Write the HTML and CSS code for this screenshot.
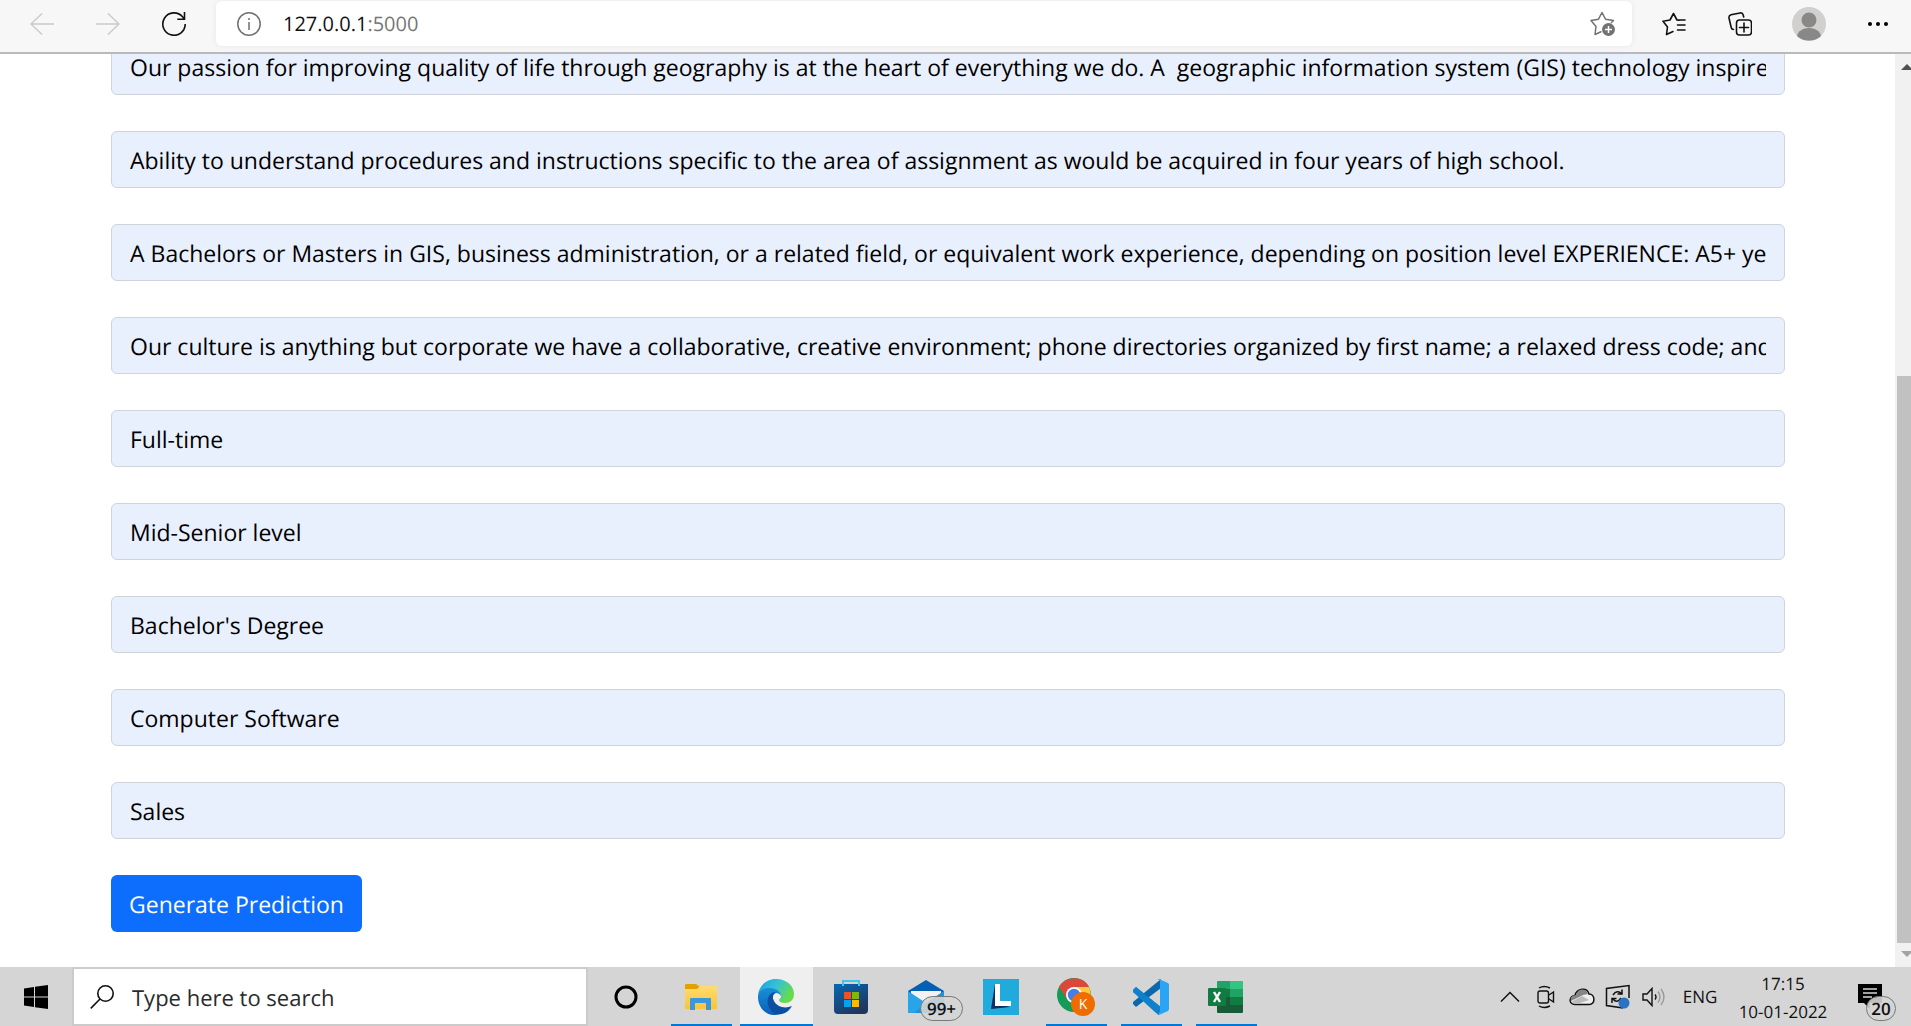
FILE: index.html
```html
<!DOCTYPE html>
<html lang="en">
<head>
<meta charset="utf-8">
<title>127.0.0.1:5000</title>
<link rel="stylesheet" href="styles.css">
</head>
<body>
<header class="toolbar">
  <button class="tool" aria-label="Back" disabled><svg width="24" height="24" viewBox="0 0 24 24" fill="none" stroke="#cacaca" stroke-width="1.4"><path d="M24 12H1M12 1.500L1 12l11 10.500"/></svg></button>
  <button class="tool" aria-label="Forward" disabled><svg width="24" height="24" viewBox="0 0 24 24" fill="none" stroke="#cacaca" stroke-width="1.400"><path d="M0 12h23M12 1.500L23 12 12 22.500"/></svg></button>
  <button class="tool" aria-label="Refresh"><svg width="24" height="24" viewBox="0 0 24 24" fill="none" stroke="#111" stroke-width="1.600"><path d="M23.200 12A11.200 11.200 0 1 1 20.500 4.800L22.500 7M22.500 0v7.200h-7.200"/></svg></button>
  <div class="address">
    <svg width="24" height="24" viewBox="0 0 24 24" fill="none" stroke="#6f6f6f" stroke-width="1.500"><circle cx="12" cy="12" r="11.200"/><path d="M12 10v8M12 6v2"/></svg>
    <span class="url">127.0.0.1<span class="port">:5000</span></span>
    <button class="add-favorite" aria-label="Add this page to favorites"><svg width="26" height="26" viewBox="0 0 26 26" fill="none" stroke="#727272" stroke-width="1.500" stroke-linejoin="round"><path d="M11.500 20.500L5 23.500l1-8L1 9.500l7.500-1.300L12 1.500l3.500 6.700 8 1.300-2.500 2.500"/><circle cx="18.500" cy="18.500" r="6.500" fill="#727272" stroke="none"/><path stroke="#fff" d="M18.500 15v7M15 18.500h7"/></svg></button>
  </div>
  <button class="tool" aria-label="Favorites"><svg width="24" height="24" viewBox="0 0 24 24" fill="none" stroke="#111" stroke-width="1.600" stroke-linejoin="round" stroke-linecap="round"><path d="M11 19.500L4.500 22.500l1-7.500L1 9.200l7-1.200 3.500-6.500L15 8l2 .3M15.500 8H23M15.500 13H23M15.500 18H23"/></svg></button>
  <button class="tool" aria-label="Collections"><svg width="24" height="24" viewBox="0 0 24 24" fill="none" stroke="#111" stroke-width="1.600" stroke-linecap="round"><rect x="8.500" y="8" width="15" height="15" rx="3"/><path d="M16 11v9M11.500 15.500h9M5.500 17.500c-1 0-2-.8-2.300-2L1 6c-.3-1.700.5-2.700 2-3.200L12 1c1.700-.3 2.800.5 3.200 2l.5 2"/></svg></button>
  <button class="tool profile" aria-label="Profile"><svg width="34" height="34" viewBox="0 0 34 34"><circle cx="17" cy="17" r="17" fill="#d2d0ce"/><circle cx="17" cy="13" r="7.500" fill="#8a8886"/><path d="M5 29c1-5 6-8 12-8s11 3 12 8c-6 6-18 6-24 0z" fill="#8a8886"/></svg></button>
  <button class="tool" aria-label="Settings and more"><svg width="20" height="6" viewBox="0 0 20 6"><circle cx="2" cy="3" r="2"/><circle cx="10" cy="3" r="2"/><circle cx="18" cy="3" r="2"/></svg></button>
</header>

<main class="viewport">
  <form class="form">
    <input class="field" aria-label="Company profile" value="Our passion for improving quality of life through geography is at the heart of everything we do. A&nbsp; geographic information system (GIS) technology inspire">
    <input class="field" aria-label="Description" value="Ability to understand procedures and instructions specific to the area of assignment as would be acquired in four years of high school.">
    <input class="field" aria-label="Requirements" value="A Bachelors or Masters in GIS, business administration, or a related field, or equivalent work experience, depending on position level EXPERIENCE: A5+ years">
    <input class="field" aria-label="Benefits" value="Our culture is anything but corporate we have a collaborative, creative environment; phone directories organized by first name; a relaxed dress code; and o">
    <input class="field" aria-label="Employment type" value="Full-time">
    <input class="field" aria-label="Required experience" value="Mid-Senior level">
    <input class="field" aria-label="Required education" value="Bachelor's Degree">
    <input class="field" aria-label="Industry" value="Computer Software">
    <input class="field" aria-label="Function" value="Sales">
    <button class="submit" type="button">Generate Prediction</button>
  </form>
  <div class="scrollbar">
    <svg class="arrow" width="12" height="6" viewBox="0 0 12 6"><path d="M0 6l6-6 6 6z" fill="#505050"/></svg>
    <div class="track"><div class="thumb"></div></div>
    <svg class="arrow" width="12" height="6" viewBox="0 0 12 6"><path d="M0 0l6 6 6-6z" fill="#a3a3a3"/></svg>
  </div>
</main>

<footer class="taskbar">
  <button class="start" aria-label="Start"><svg width="24" height="24" viewBox="0 0 24 24"><path d="M0 3.400L10 2v9.400H0zM11 1.800L24 0v11.400H11zM0 12.400h10V22L0 20.600zM11 12.400h13V24l-13-1.800z"/></svg></button>
  <label class="search">
    <svg width="24" height="24" viewBox="0 0 24 24" fill="none" stroke="#111" stroke-width="1.600"><circle cx="15.500" cy="8.500" r="7.700"/><path d="M10 14L.8 23.400"/></svg>
    <input class="search-input" aria-label="Search" placeholder="Type here to search">
  </label>
  <nav class="tasks">
    <button class="task" aria-label="Cortana"><svg width="24" height="24" viewBox="0 0 24 24"><circle cx="12" cy="12" r="10" fill="none" stroke="#000" stroke-width="3"/></svg></button>
    <button class="task open" aria-label="File Explorer"><svg width="34" height="28" viewBox="0 0 34 28"><defs><linearGradient id="folder" x2="0" y2="1"><stop stop-color="#ffdb70"/><stop offset="1" stop-color="#fac43a"/></linearGradient></defs><path d="M1 6V2q0-1 1-1h10l4 3-3 3z" fill="#e3a100"/><path d="M1 6h12l3-3h16q1 0 1 1v21q0 1-1 1H2q-1 0-1-1z" fill="url(#folder)"/><path d="M6 27V16q0-1 1-1h19q1 0 1 1v11h-5v-7H11v7z" fill="#3a96dd"/></svg></button>
    <button class="task active" aria-label="Microsoft Edge"><svg width="36" height="36" viewBox="0 0 36 36"><defs><linearGradient id="edgeTop" x1="0" x2="1" y2=".5"><stop stop-color="#1a9bdf"/><stop offset=".5" stop-color="#35c1d8"/><stop offset="1" stop-color="#68dc48"/></linearGradient><linearGradient id="edgeLeft" x2="0" y2="1"><stop stop-color="#1790d8"/><stop offset="1" stop-color="#0a5fb8"/></linearGradient></defs><path d="M0 16C1 7 8 0 18 0c11 0 18 7 18 15 0 6-4 9-9 9-4 0-6-1-6-3 0-1 2-1 2-4 0-4-4-7-10-7C7 10 2 12 0 16z" fill="url(#edgeTop)"/><path d="M0 18C0 12 5 9 11 9c8 0 12 4 12 8-1-2-3-3-5-3-5 0-7 5-5 10 2 6 7 9 13 8-3 3-6 4-9 4C7 36 0 28 0 18z" fill="url(#edgeLeft)"/><path d="M14 14c-5 3-6 10-2 16 3 5 8 6 12 5 4-1 8-4 10-8-7 3-15 1-18-5-2-4-1-7 2-8-1-1-3-1-4 0z" fill="#0c4fa0"/></svg></button>
    <button class="task" aria-label="Microsoft Store"><svg width="36" height="36" viewBox="0 0 36 36"><defs><linearGradient id="store" x2=".6" y2="1"><stop stop-color="#0669b2"/><stop offset="1" stop-color="#20365f"/></linearGradient></defs><path d="M1 5h34v26q0 4-4 4H5q-4 0-4-4z" fill="url(#store)"/><path d="M10 7V2h16v5" fill="none" stroke="#41c7ee" stroke-width="2"/><path d="M11 13h7v7h-7z" fill="#f25022"/><path d="M19 13h7v7h-7z" fill="#7fba00"/><path d="M11 21h7v7h-7z" fill="#00a4ef"/><path d="M19 21h7v7h-7z" fill="#ffb900"/></svg></button>
    <button class="task" aria-label="Mail"><svg width="36" height="36" viewBox="0 0 36 36"><path d="M0 12L18 1l18 11v5H0z" fill="#0560b3"/><path d="M3 12h30v8L18 26 3 20z" fill="#f2f2f2"/><path d="M0 12l18 12 18-12v22H0z" fill="#27a5e8"/><path d="M18 24l18-12v22H6z" fill="#1687d8" opacity=".6"/></svg><span class="badge mail-badge">99+</span></button>
    <button class="task" aria-label="L"><svg width="36" height="36" viewBox="0 0 36 36"><path d="M0 0h36v36H0z" fill="#21abdc"/><path d="M12 5L8 30l19-2-14-4z" fill="#0c2f62"/><path d="M12 5h5v17h11v5H12z" fill="#fff"/></svg></button>
    <button class="task open" aria-label="Google Chrome"><svg width="38" height="38" viewBox="0 0 38 38"><circle cx="17" cy="17" r="17" fill="#149b57"/><path d="M2 9C8-2 26-3 32 9H17L10 21z" fill="#dc473b"/><path d="M17 9h15c5 11-2 24-15 25l7-13z" fill="#fdc938"/><circle cx="17" cy="17" r="8" fill="#fff"/><circle cx="17" cy="17" r="6.200" fill="#447ee8"/><circle cx="26" cy="26" r="12" fill="#ef6c00"/><text x="26" y="31" text-anchor="middle" class="initial">K</text></svg></button>
    <button class="task open" aria-label="Visual Studio Code"><svg width="36" height="36" viewBox="0 0 36 36"><path d="M0 11l3-3 25 20v7L0 13z" fill="#0f80cc"/><path d="M0 25l3 3L28 9V0L0 23z" fill="#0b68ad"/><path d="M26 0l9 4q1 1 1 2v24q0 1-1 2l-9 4-2-1q3 0 3-2V3q0-3-3-2z" fill="#2aa4f4"/><path d="M0 11l3-3 23 19v9l-3-2L0 13z" fill="#0f80cc"/></svg></button>
    <button class="task open" aria-label="Excel"><svg width="36" height="34" viewBox="0 0 36 34"><path d="M9 2q0-1 1-1h12v8H9z" fill="#21a366"/><path d="M22 1h12q1 0 1 1v7H22z" fill="#33c481"/><path d="M9 9h13v8H9z" fill="#107c41"/><path d="M22 9h13v8H22z" fill="#21a366"/><path d="M9 17h26v15q0 1-1 1H10q-1 0-1-1z" fill="#185c37"/><path d="M22 17h13v8H22z" fill="#107c41"/><rect y="8" width="18" height="18" rx="1" fill="#107c41"/><path d="M6 12l6 10M12 12L6 22" stroke="#fff" stroke-width="2.400"/></svg></button>
  </nav>
  <div class="tray">
    <button class="tray-item" aria-label="Show hidden icons"><svg width="20" height="12" viewBox="0 0 20 12" fill="none" stroke="#111" stroke-width="1.500"><path d="M1 10.500l9-9 9 9"/></svg></button>
    <button class="tray-item" aria-label="Meet Now"><svg width="18" height="24" viewBox="0 0 18 24" fill="none" stroke="#111" stroke-width="1.400"><rect x="1" y="6" width="10.500" height="12" rx="2"/><path d="M12 10l4.500-3v10L12 14M2 3q5-3 11 0M2 21q5 3 11 0"/></svg></button>
    <button class="tray-item" aria-label="OneDrive"><svg width="26" height="18" viewBox="0 0 26 18"><path d="M6 16.500c-7 0-6-9 0-9C8 0 18-1 20 6c6 0 7 10 0 10.500z" fill="#eee" stroke="#111" stroke-width="1.500"/><path d="M2 13l12-6 5-1C17 0 9 0 7 7c-4 0-6 3-5 6z" fill="#858585"/><path d="M2 14l11-6 7 4-12 4z" fill="#bbb"/></svg></button>
    <button class="tray-item" aria-label="Windows Update"><svg width="26" height="26" viewBox="0 0 26 26" fill="none" stroke="#111" stroke-width="1.500"><path d="M18 24L1.500 21.500V4.500L24 1.500V14M8 11q4-6 9-1M17 5.500V10h-4.500M16 14q-4 6-8 1M7 19v-4.500h4.500"/><circle cx="19" cy="19" r="5.500" fill="#2a72c3" stroke="none"/></svg></button>
    <button class="tray-item" aria-label="Volume"><svg width="24" height="20" viewBox="0 0 24 20" fill="none" stroke="#111" stroke-width="1.400"><path d="M1 7h4l5-5.500v17L5 13H1zM13 7.500q2 2.500 0 5"/><path d="M16 4.500q4 5.500 0 11M19 2q6 8 0 16" stroke="#999"/></svg></button>
    <span class="language">ENG</span>
    <time class="clock"><span>17:15</span><span>10-01-2022</span></time>
    <button class="notifications" aria-label="Notifications"><svg width="24" height="26" viewBox="0 0 24 26"><path d="M0 0h24v19H12v6l-6-6H0z"/><path d="M5 5h14M5 9h14M5 13h9" stroke="#d5d5d5" stroke-width="1.300"/></svg><span class="badge count-badge">20</span></button>
  </div>
</footer>
</body>
</html>
```
FILE: styles.css
```css
* {
  box-sizing: border-box;
}

body {
  margin: 0;
  height: 100vh;
  display: flex;
  flex-direction: column;
  overflow: hidden;
  background: #fff;
  color: #111;
  font-family: "Open Sans", "Noto Sans", sans-serif;
  text-rendering: geometricPrecision;
}

button {
  padding: 0;
  border: 0;
  background: none;
  font: inherit;
  color: inherit;
}

button,
input {
  text-rendering: inherit;
}

svg {
  display: block;
  flex: none;
}

/* Browser toolbar */
.toolbar {
  flex: none;
  display: flex;
  align-items: center;
  padding: 1px 0 6px 9px;
  background: #f7f7f7;
  border-bottom: 2px solid #b9b9b9;
}

.tool {
  width: 66px;
  display: flex;
  justify-content: center;
}

.profile {
  width: 72px;
}

.address {
  flex: 1;
  display: flex;
  align-items: center;
  height: 45px;
  margin: 0 9px;
  padding: 0 16px 0 21px;
  background: #fff;
  border-radius: 6px;
  box-shadow: 0 0 6px #e8e8e8;
}

.url {
  flex: 1;
  padding-left: 22px;
  font-size: 20px;
}

.port {
  color: #767676;
}

/* Page */
.viewport {
  flex: 1;
  min-height: 0;
  display: flex;
  overflow: hidden;
}

.form {
  flex: 1;
  min-width: 0;
  display: flex;
  flex-direction: column;
  justify-content: flex-end;
  align-items: flex-start;
  gap: 36px;
  padding: 0 110px 35px 111px;
}

.field {
  flex: none;
  width: 100%;
  height: 57px;
  padding: 0 18px;
  border: 1px solid #ced4da;
  border-radius: 6px;
  background: #e8f0fe;
  color: #000;
  font: 23px "Open Sans", "Noto Sans", sans-serif;
}

.submit {
  flex: none;
  height: 57px;
  padding: 0 18px;
  border-radius: 6px;
  background: #0d6efd;
  color: #fff;
  font-size: 23px;
}

.scrollbar {
  flex: none;
  width: 16px;
  display: flex;
  flex-direction: column;
  padding: 10px 0;
  background: #f1f1f1;
  overflow: hidden;
}

.arrow {
  margin-left: 6px;
}

.track {
  flex: 1;
  display: flex;
  flex-direction: column;
  justify-content: flex-end;
  padding: 0 0 8px 2px;
}

.thumb {
  height: 65%;
  background: #c1c1c1;
}

/* Taskbar */
.taskbar {
  flex: none;
  height: 59px;
  display: flex;
  align-items: stretch;
  background: #d5d5d5;
}

.start {
  width: 72px;
  display: flex;
  align-items: center;
  justify-content: center;
}

.search {
  width: 516px;
  display: flex;
  align-items: center;
  padding: 0 16px;
  gap: 18px;
  background: #fff;
  border: 2px solid #cbcbcb;
}

.search-input {
  flex: 1;
  min-width: 0;
  padding: 2px 0 0;
  border: 0;
  outline: 0;
  font: 22px "Open Sans", "Noto Sans", sans-serif;
}

.search-input::placeholder {
  color: #2b2b2b;
}

.tasks {
  display: flex;
  gap: 2px;
  padding-left: 2px;
}

.task {
  position: relative;
  width: 73px;
  display: flex;
  align-items: center;
  justify-content: center;
  padding-right: 2px;
}

.open::after,
.active::after {
  content: "";
  position: absolute;
  bottom: 0;
  left: 6px;
  right: 6px;
  height: 2px;
  background: #0078d7;
}

.active {
  background: #efefef;
}

.active::after {
  left: 0;
  right: 0;
}

.badge {
  position: absolute;
  height: 25px;
  border: 1px solid #777;
  border-radius: 13px;
  background: rgba(213, 213, 213, .9);
  text-align: center;
  font-weight: 600;
  line-height: 23px;
}

.mail-badge {
  left: 30px;
  top: 29px;
  width: 43px;
  font-size: 17px;
}

.initial {
  fill: #fff;
  font: 14px "Open Sans", "Noto Sans", sans-serif;
}

.tray {
  flex: 1;
  display: flex;
  align-items: stretch;
  justify-content: flex-end;
}

.tray-item {
  width: 36px;
  display: flex;
  align-items: center;
  justify-content: center;
}

.language,
.clock {
  display: flex;
  align-items: center;
  justify-content: center;
  font-size: 17px;
}

.language {
  width: 56px;
}

.clock {
  width: 110px;
  flex-direction: column;
  padding-top: 2px;
  line-height: 28px;
}

.notifications {
  position: relative;
  width: 73px;
  display: flex;
  align-items: center;
  padding-left: 20px;
}

.count-badge {
  left: 28px;
  top: 29px;
  width: 30px;
  font-size: 17px;
}
```
